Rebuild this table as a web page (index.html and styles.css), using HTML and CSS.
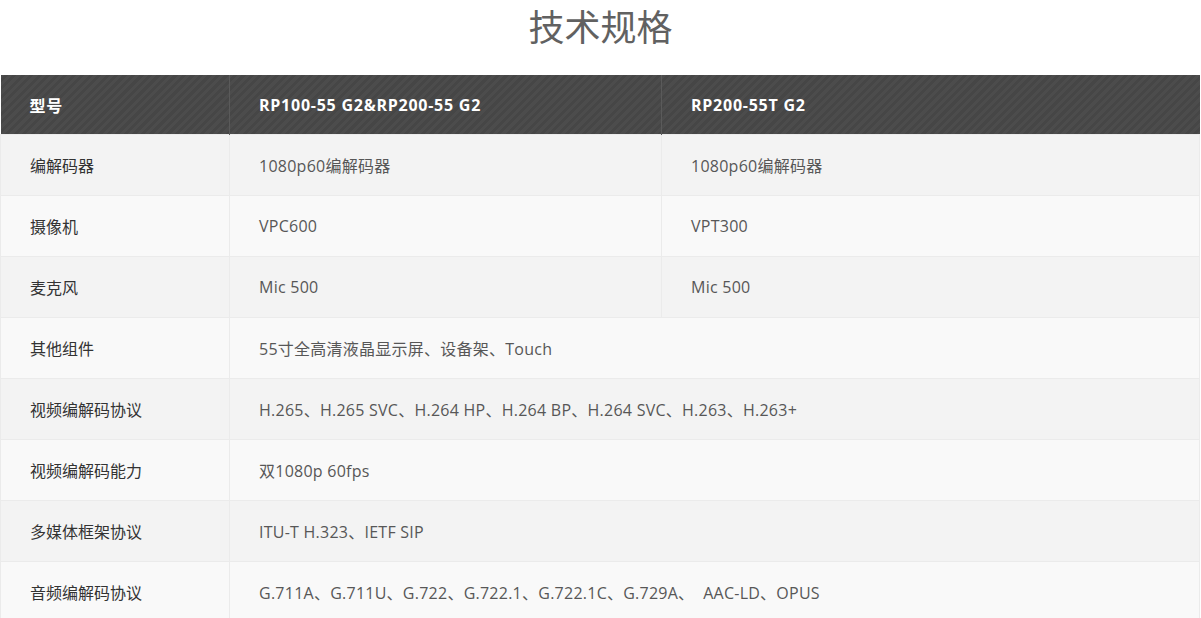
FILE: index.html
```html
<!DOCTYPE html>
<html lang="zh-CN">
<head>
<meta charset="utf-8">
<title>技术规格</title>
<link rel="stylesheet" href="styles.css">
</head>
<body>
<section class="specs">
  <h2 class="specs-title">技术规格</h2>
  <table class="spec-table">
    <colgroup>
      <col class="col-label">
      <col class="col-a">
      <col class="col-b">
    </colgroup>
    <thead>
      <tr class="head-row">
        <th>型号</th>
        <th>RP100-55 G2&amp;RP200-55 G2</th>
        <th>RP200-55T G2</th>
      </tr>
    </thead>
    <tbody>
      <tr class="odd"><td class="label">编解码器</td><td>1080p60编解码器</td><td>1080p60编解码器</td></tr>
      <tr class="even"><td class="label">摄像机</td><td>VPC600</td><td>VPT300</td></tr>
      <tr class="odd"><td class="label">麦克风</td><td>Mic 500</td><td>Mic 500</td></tr>
      <tr class="even"><td class="label">其他组件</td><td colspan="2">55寸全高清液晶显示屏、设备架、Touch</td></tr>
      <tr class="odd"><td class="label">视频编解码协议</td><td colspan="2">H.265、H.265 SVC、H.264 HP、H.264 BP、H.264 SVC、H.263、H.263+</td></tr>
      <tr class="even"><td class="label">视频编解码能力</td><td colspan="2">双1080p 60fps</td></tr>
      <tr class="odd"><td class="label">多媒体框架协议</td><td colspan="2">ITU-T H.323、IETF SIP</td></tr>
      <tr class="even"><td class="label">音频编解码协议</td><td colspan="2">G.711A、G.711U、G.722、G.722.1、G.722.1C、G.729A、&nbsp;&nbsp;AAC-LD、OPUS</td></tr>
    </tbody>
  </table>
</section>
</body>
</html>
```

FILE: styles.css
```css
html, body {
  margin: 0;
  padding: 0;
  background: #ffffff;
}

body {
  font-family: "Open Sans", "Noto Sans CJK SC", sans-serif;
  color: #555555;
}

.specs {
  width: 1201px;
}

.specs-title {
  margin: 0;
  height: 75px;
  box-sizing: border-box;
  text-align: center;
  font-family: "Noto Sans CJK SC", sans-serif;
  font-weight: 400;
  font-size: 36px;
  line-height: 50px;
  color: #616161;
}

.spec-table {
  width: 1200px;
  border-collapse: collapse;
  table-layout: fixed;
  font-size: 16px;
  letter-spacing: 0.25px;
}

.col-label { width: 229px; }
.col-a { width: 432px; }
.col-b { width: auto; }

.spec-table th,
.spec-table td {
  padding: 0 0 0 29px;
  text-align: left;
  vertical-align: middle;
  white-space: nowrap;
}

.head-row {
  background-color: #4a4a4a;
  background-image: repeating-linear-gradient(
    -45deg,
    #4c4c4c 0,
    #4c4c4c 3px,
    #464646 3px,
    #464646 6px
  );
}

.head-row th {
  height: 59px;
  color: #ffffff;
  font-weight: 700;
  font-size: 16px;
  letter-spacing: 0.75px;
  border-left: 1px solid #5a5a5a;
}

.head-row th:first-child {
  border-left: none;
}

.spec-table td {
  height: 60px;
  border: 1px solid #ebebeb;
  color: #575757;
}

.spec-table td.label {
  color: #333333;
  letter-spacing: 0;
}

.odd { background: #f3f3f3; }
.even { background: #f9f9f9; }
```
